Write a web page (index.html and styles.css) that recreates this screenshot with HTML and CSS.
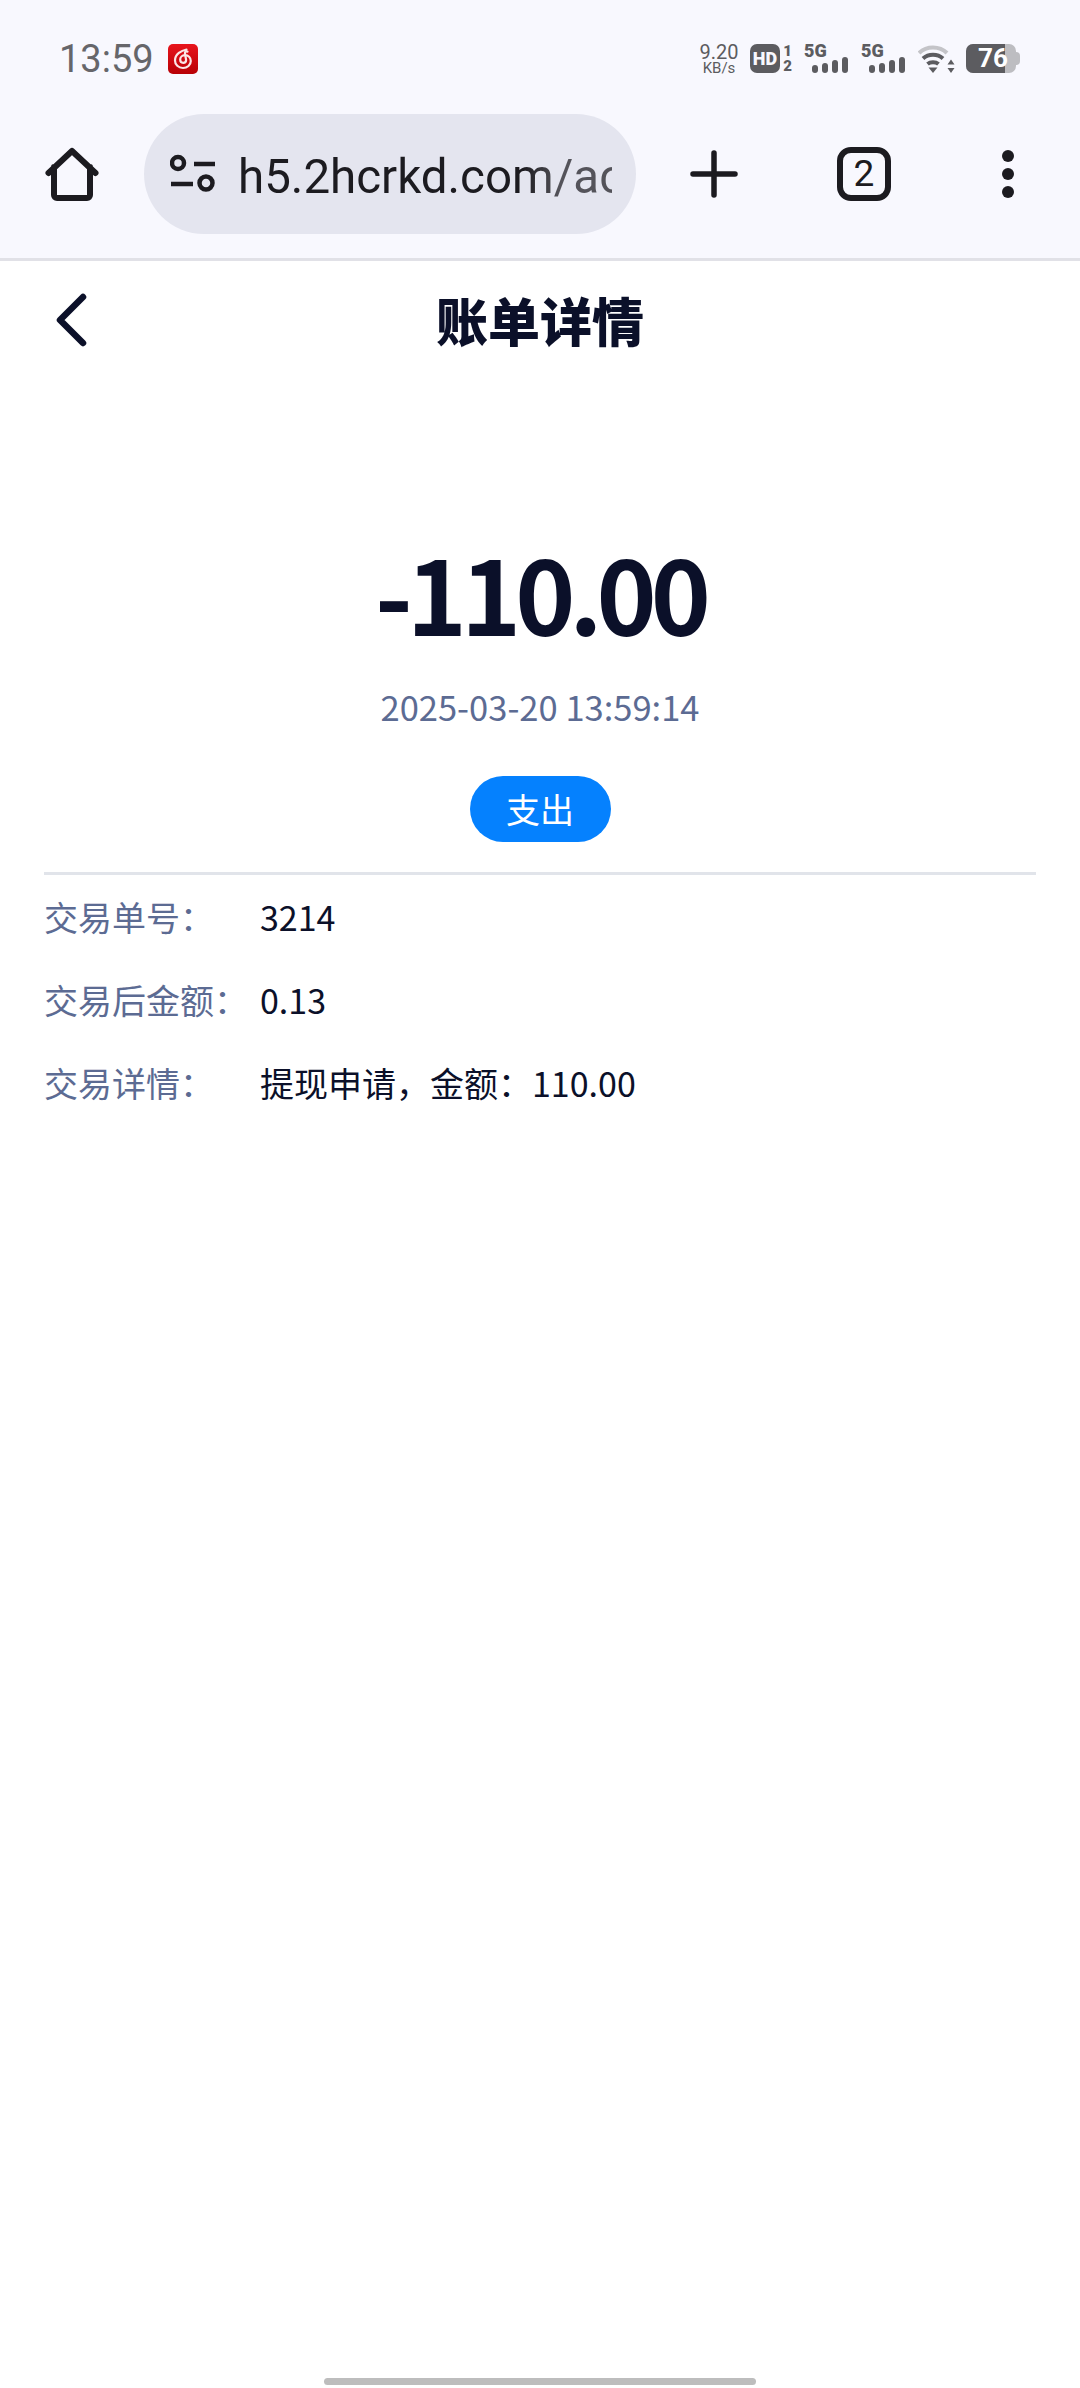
FILE: index.html
```html
<!DOCTYPE html>
<html lang="zh-CN">
<head>
    <meta charset="UTF-8">
    <meta name="viewport" content="width=device-width, initial-scale=1.0">
    <title>账单详情</title>
    <link rel="stylesheet" href="styles.css">
</head>
<body>
    <header class="browser">
        <div class="status-bar">
            <div class="status-left">
                <span class="clock">13:59</span>
                <svg class="app-badge" viewBox="0 0 30 30">
                    <defs>
                        <linearGradient id="badge-red" x1="0" y1="0" x2="0" y2="1">
                            <stop offset="0" stop-color="#e8141c"/>
                            <stop offset="1" stop-color="#b80006"/>
                        </linearGradient>
                    </defs>
                    <rect width="30" height="30" rx="5" fill="url(#badge-red)"/>
                    <path d="M18.500 5.500c-5 1-11.500 4.500-11.500 11 0 4.200 3.400 7.500 8 7.500 4.300 0 7.800-3 7.800-7 0-3.400-2.600-5.800-5.800-5.800-2.800 0-4.800 2-4.800 4.300 0 2 1.400 3.300 3 3.300 1.700 0 2.900-1.300 2.900-2.900l-1.100-6.200c-.3-1.500.7-2.600 2.500-2.100" fill="none" stroke="#fbe6e6" stroke-width="2.200" stroke-linecap="round"/>
                </svg>
            </div>
            <div class="status-right">
                <div class="speed"><span>9.20</span><span>KB/s</span></div>
                <div class="hd-group">
                    <span class="hd">HD</span>
                    <div class="sim-nums"><span>1</span><span>2</span></div>
                </div>
                <div class="signal">
                    <span class="net">5G</span>
                    <div class="bars"><i class="b1"></i><i class="b2"></i><i class="b3"></i><i class="b4"></i></div>
                </div>
                <div class="signal">
                    <span class="net">5G</span>
                    <div class="bars"><i class="b1"></i><i class="b2"></i><i class="b3"></i><i class="b4"></i></div>
                </div>
                <svg class="wifi" viewBox="0 0 37 30">
                    <path d="M1 9C8.500 1.500 21.500 1.500 29 9" fill="none" stroke="#c4c4c8" stroke-width="4"/>
                    <path d="M5 14.500C10.500 9.500 19.500 9.500 25 14.500" fill="none" stroke="#5c5c60" stroke-width="4"/>
                    <path d="M9.500 20C12.500 17.500 17.500 17.500 20.500 20" fill="none" stroke="#5c5c60" stroke-width="4"/>
                    <path d="M10.500 23.500h9L15 29z" fill="#5c5c60"/>
                    <path d="M33 15.500l3.500 5h-7zM33 29l-3.500-5h7z" fill="#5c5c60"/>
                </svg>
                <div class="battery">
                    <div class="battery-body"><div class="battery-fill"></div><span>76</span></div>
                    <div class="battery-cap"></div>
                </div>
            </div>
        </div>
        <div class="toolbar">
            <svg class="tool-home" viewBox="0 0 54 54">
                <path d="M3.500 26 27 4l23.500 22M9 20v28a3 3 0 0 0 3 3h30a3 3 0 0 0 3-3V20" fill="none" stroke="#1c1b20" stroke-width="6" stroke-linecap="round" stroke-linejoin="round"/>
            </svg>
            <div class="omnibox">
                <svg class="tune" viewBox="0 0 46 40">
                    <circle cx="8" cy="9" r="6" fill="none" stroke="#1c1b20" stroke-width="4.500"/>
                    <path d="M24 10h21M1 30h22" stroke="#1c1b20" stroke-width="4.500"/>
                    <circle cx="36" cy="29" r="6.500" fill="none" stroke="#1c1b20" stroke-width="4.500"/>
                </svg>
                <div class="url">h5.2hcrkd.com/ac</div>
            </div>
            <svg class="tool-plus" viewBox="0 0 48 48">
                <path d="M3 24h42M24 3v42" stroke="#1c1b20" stroke-width="5.500" stroke-linecap="round"/>
            </svg>
            <div class="tabs-count">2</div>
            <div class="tool-menu"><i></i><i></i><i></i></div>
        </div>
    </header>

    <main class="page">
        <div class="nav-bar">
            <svg class="back" viewBox="0 0 34 54">
                <path d="M29 4 6 27l23 23" fill="none" stroke="#0b1029" stroke-width="6.500" stroke-linecap="round" stroke-linejoin="round"/>
            </svg>
            <h1>账单详情</h1>
        </div>

        <section class="summary">
            <div class="amount">-110.00</div>
            <div class="time">2025-03-20 13:59:14</div>
            <span class="tag">支出</span>
        </section>

        <section class="details">
            <div class="row"><span class="label">交易单号&#65306;</span><span class="value">3214</span></div>
            <div class="row"><span class="label">交易后金额&#65306;</span><span class="value">0.13</span></div>
            <div class="row"><span class="label">交易详情&#65306;</span><span class="value">提现申请&#65292;金额&#65306;110.00</span></div>
        </section>
    </main>

    <div class="home-bar"></div>
</body>
</html>
```

FILE: styles.css
```css
* {
    box-sizing: border-box;
}

html, body {
    margin: 0;
    padding: 0;
}

body {
    width: 1080px;
    height: 2388px;
    overflow: hidden;
    display: flex;
    flex-direction: column;
    background-color: #fff;
    font-family: "Noto Sans CJK SC", "Noto Sans", sans-serif;
}

/* browser chrome */
.browser {
    height: 261px;
    flex: none;
    background-color: #f8f8fe;
    border-bottom: 3px solid #e1e1e7;
}

.status-bar {
    height: 114px;
    padding: 0 60px 0 59px;
    display: flex;
    align-items: flex-start;
    justify-content: space-between;
}

.status-left {
    display: flex;
    align-items: center;
    gap: 14px;
    height: 30px;
    margin-top: 44px;
}

.clock {
    font-family: Roboto, sans-serif;
    font-size: 38px;
    color: #66666a;
}

.app-badge {
    width: 30px;
    height: 30px;
}

.status-right {
    display: flex;
    align-items: flex-start;
    margin-top: 44px;
    color: #5c5c60;
}

.speed {
    width: 38px;
    display: flex;
    flex-direction: column;
    align-items: center;
    font-family: Roboto, sans-serif;
    font-size: 15px;
    line-height: 14px;
    white-space: nowrap;
}

.speed span:first-child {
    font-size: 20px;
    line-height: 17px;
}

.hd-group {
    display: flex;
    margin-left: 12px;
}

.hd {
    width: 30px;
    height: 29px;
    border-radius: 7px;
    background-color: #5c5c60;
    color: #f8f8fe;
    font-family: Roboto, sans-serif;
    font-weight: 900;
    font-size: 18px;
    line-height: 29px;
    text-align: center;
}

.sim-nums {
    width: 11px;
    margin-left: 2px;
    display: flex;
    flex-direction: column;
    align-items: center;
    font-family: Roboto, sans-serif;
    font-weight: 900;
    font-size: 15px;
    line-height: 14.500px;
}

.signal {
    width: 44px;
    height: 30px;
    margin-left: 11px;
}

.signal + .signal {
    margin-left: 13px;
}

.net {
    display: block;
    font-family: Roboto, sans-serif;
    font-weight: 900;
    font-size: 18px;
    line-height: 14px;
}

.bars {
    display: flex;
    align-items: flex-end;
    justify-content: flex-end;
    gap: 4px;
    height: 15px;
}

.bars i {
    display: block;
    width: 6px;
    background-color: #5c5c60;
    border-radius: 3px;
}

.bars .b1 { height: 8px; }
.bars .b2 { height: 10px; }
.bars .b3 { height: 13px; }
.bars .b4 { height: 16px; }

.wifi {
    width: 37px;
    height: 30px;
    margin-left: 13px;
}

.battery {
    display: flex;
    align-items: center;
    margin-left: 11px;
}

.battery-body {
    width: 50px;
    height: 29px;
    border-radius: 7px;
    background-color: #bdbdc1;
    overflow: hidden;
    position: relative;
}

.battery-fill {
    width: 39px;
    height: 100%;
    background-color: #5c5c60;
}

.battery-body span {
    position: absolute;
    top: 0;
    left: 12px;
    font-family: Roboto, sans-serif;
    font-weight: 700;
    font-size: 26px;
    line-height: 29px;
    color: #fff;
}

.battery-cap {
    width: 4px;
    height: 13px;
    border-radius: 0 4px 4px 0;
    background-color: #bdbdc1;
}

.toolbar {
    height: 120px;
    display: flex;
    align-items: center;
}

.tool-home {
    width: 54px;
    height: 54px;
    margin-left: 45px;
}

.omnibox {
    width: 492px;
    height: 120px;
    margin-left: 45px;
    padding: 0 24px 0 26px;
    display: flex;
    align-items: center;
    border-radius: 60px;
    background-color: #e4e5ef;
}

.tune {
    width: 46px;
    height: 40px;
    flex: none;
}

.url {
    margin-left: 22px;
    padding-top: 5px;
    flex: 1;
    overflow: hidden;
    white-space: nowrap;
    font-family: Roboto, sans-serif;
    font-size: 47.500px;
    color: #1c1b20;
    -webkit-mask-image: linear-gradient(to right, #000 76%, rgba(0, 0, 0, 0.72) 86%);
    mask-image: linear-gradient(to right, #000 76%, rgba(0, 0, 0, 0.72) 86%);
}

.tool-plus {
    width: 48px;
    height: 48px;
    margin-left: 54px;
}

.tabs-count {
    width: 54px;
    height: 54px;
    margin-left: 99px;
    border: 6px solid #1c1b20;
    border-radius: 14px;
    font-family: Roboto, sans-serif;
    font-size: 37px;
    line-height: 42px;
    text-align: center;
    color: #1c1b20;
}

.tool-menu {
    margin-left: 111px;
    display: flex;
    flex-direction: column;
    gap: 6px;
}

.tool-menu i {
    display: block;
    width: 12px;
    height: 12px;
    border-radius: 50%;
    background-color: #1c1b20;
}

/* bill page */
.page {
    flex: 1;
    padding: 0 44px;
}

.nav-bar {
    height: 116px;
    display: flex;
    align-items: center;
    justify-content: center;
    position: relative;
}

.nav-bar h1 {
    margin: 0;
    font-size: 52px;
    font-weight: 900;
    color: #0b1029;
}

.back {
    position: absolute;
    left: 10px;
    top: 32px;
    width: 34px;
    height: 54px;
}

.summary {
    padding-top: 150px;
    padding-bottom: 30px;
    display: flex;
    flex-direction: column;
    align-items: center;
    border-bottom: 3px solid #e1e4ea;
}

.amount {
    font-size: 102px;
    font-weight: 700;
    line-height: 130px;
    letter-spacing: -6px;
    color: #0b1029;
}

.time {
    margin-top: 24px;
    font-size: 34.500px;
    line-height: 50px;
    color: #5c6b93;
}

.tag {
    margin-top: 45px;
    width: 141px;
    height: 66px;
    border-radius: 33px;
    background-color: #0581fe;
    color: #fff;
    font-size: 34px;
    line-height: 66px;
    text-align: center;
}

.row {
    height: 83px;
    display: flex;
    align-items: center;
    font-size: 34px;
}

.label {
    width: 216px;
    flex: none;
    color: #5c6b93;
}

.value {
    color: #0b1029;
}

.home-bar {
    position: absolute;
    left: 324px;
    top: 2378px;
    width: 432px;
    height: 7px;
    border-radius: 4px;
    background-color: #bdbdbd;
}
```
